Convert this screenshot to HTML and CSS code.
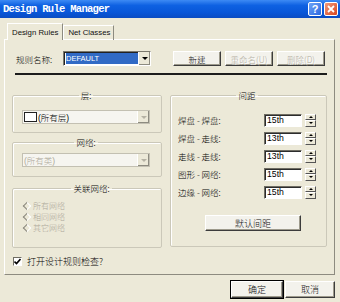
FILE: index.html
```html
<!DOCTYPE html>
<html lang="zh-CN">
<head>
    <meta charset="UTF-8">
    <title>Design Rule Manager</title>
    <link rel="stylesheet" href="styles.css">
</head>
<body>

    <div class="titlebar">
        <span class="title">Design Rule Manager</span>
        <div class="caption-btns">
            <span class="cbtn help">?</span>
            <span class="cbtn close">
                <svg width="8" height="8" viewBox="0 0 8 8"><path d="M1 1L7 7M7 1L1 7" stroke="#fff" stroke-width="1.8"/></svg>
            </span>
        </div>
    </div>

    <div class="tabs">
        <span class="tab active">Design Rules</span>
        <span class="tab">Net Classes</span>
    </div>

    <div class="page">
        <div class="rule-row">
            <span class="lbl">规则名称:</span>
            <div class="combo name-combo">
                <span class="combo-text"><span class="hilite">DEFAULT</span></span>
                <span class="drop"><span class="arrow"></span></span>
            </div>
            <div class="row-btns">
                <button class="btn">新建</button>
                <button class="btn" disabled>重命名(U)</button>
                <button class="btn" disabled>删除(D)</button>
            </div>
        </div>

        <div class="sep"></div>

        <div class="main">
            <div class="left">
                <fieldset class="grp grp-layer">
                    <legend>层:</legend>
                    <div class="combo flat-combo">
                        <span class="combo-text"><span class="swatch"></span>(所有层)</span>
                        <span class="drop"><span class="arrow off"></span></span>
                    </div>
                </fieldset>

                <fieldset class="grp grp-net">
                    <legend>网络:</legend>
                    <div class="combo flat-combo disabled">
                        <span class="combo-text">(所有类)</span>
                        <span class="drop"><span class="arrow off"></span></span>
                    </div>
                </fieldset>

                <fieldset class="grp grp-link">
                    <legend>关联网络:</legend>
                    <div class="radio"><span class="diamond"></span>所有网络</div>
                    <div class="radio"><span class="diamond"></span>相同网络</div>
                    <div class="radio"><span class="diamond"></span>其它网络</div>
                </fieldset>
            </div>

            <fieldset class="grp grp-space">
                <legend>间距</legend>
                <div class="space-row">
                    <span class="space-lbl">焊盘 - 焊盘:</span>
                    <span class="spin-input">15th</span>
                    <span class="spinner"><span class="up"></span><span class="down"></span></span>
                </div>
                <div class="space-row">
                    <span class="space-lbl">焊盘 - 走线:</span>
                    <span class="spin-input">13th</span>
                    <span class="spinner"><span class="up"></span><span class="down"></span></span>
                </div>
                <div class="space-row">
                    <span class="space-lbl">走线 - 走线:</span>
                    <span class="spin-input">13th</span>
                    <span class="spinner"><span class="up"></span><span class="down"></span></span>
                </div>
                <div class="space-row">
                    <span class="space-lbl">图形 - 网络:</span>
                    <span class="spin-input">15th</span>
                    <span class="spinner"><span class="up"></span><span class="down"></span></span>
                </div>
                <div class="space-row">
                    <span class="space-lbl">边缘 - 网络:</span>
                    <span class="spin-input">15th</span>
                    <span class="spinner"><span class="up"></span><span class="down"></span></span>
                </div>
                <button class="btn default-space">默认间距</button>
            </fieldset>
        </div>

        <div class="check-row">
            <span class="checkbox">
                <svg width="7" height="7" viewBox="0 0 7 7"><path d="M0.5 3.5L2.5 5.5L6.5 1" stroke="#000" stroke-width="1.6" fill="none"/></svg>
            </span>
            打开设计规则检查?
        </div>
    </div>

    <div class="footer">
        <button class="btn ok">确定</button>
        <button class="btn cancel">取消</button>
    </div>

</body>
</html>
```

FILE: styles.css
```css
body {
    margin: 0;
    width: 340px;
    height: 302px;
    overflow: hidden;
    background: #ece9d8;
    font-family: "Liberation Sans", "Noto Sans CJK SC", sans-serif;
    font-size: 8.5px;
    color: #000;
}

/* title bar */
.titlebar {
    height: 18px;
    display: flex;
    align-items: center;
    justify-content: space-between;
    padding: 0 2px 0 3px;
    background: linear-gradient(#3d8af4, #0e61e2 30%, #0856d8 70%, #0a4cc2);
}
.title {
    color: #fff;
    font: bold 10.5px "Liberation Mono", monospace;
    letter-spacing: -0.7px;
}
.caption-btns {
    display: flex;
    gap: 2px;
}
.cbtn {
    width: 12px;
    height: 12px;
    border: 1px solid #fff;
    border-radius: 2px;
    display: flex;
    align-items: center;
    justify-content: center;
    color: #fff;
    font: bold 11px "Liberation Sans", sans-serif;
}
.help {
    background: linear-gradient(135deg, #6ea4f7, #2a68e0);
}
.close {
    background: linear-gradient(135deg, #f09a7c, #d9461f);
}

/* tabs */
.tabs {
    display: flex;
    align-items: flex-end;
    height: 17px;
    margin-top: 5px;
    padding-left: 7px;
}
.tab {
    height: 14px;
    line-height: 14px;
    padding: 0 3px 0 4px;
    border: 1px solid;
    border-color: #fff #8d8b80 transparent #fff;
    border-bottom: none;
    font-size: 7.8px;
    color: #111;
}
.tab.active {
    height: 16px;
    line-height: 17px;
    padding: 0 4px;
    position: relative;
    z-index: 1;
    background: #ece9d8;
}

.page {
    width: 329px;
    height: 234px;
    margin: -1px 0 0 4px;
    border: 1px solid;
    border-color: #fff #8d8b80 #8d8b80 #fff;
}

/* rule name row */
.rule-row {
    display: flex;
    align-items: center;
    height: 15px;
    margin-top: 11px;
    padding-left: 11px;
}
.lbl {
    width: 47px;
    font-family: "Noto Sans CJK SC", sans-serif;
    font-weight: 300;
}
.combo {
    display: flex;
    box-sizing: border-box;
    height: 14px;
    border: 1px solid;
    border-color: #7a786d #fff #fff #7a786d;
    background: #fff;
}
.name-combo {
    width: 88px;
    height: 15px;
    box-shadow: inset 1px 1px #222;
}
.combo-text {
    flex: 1;
    display: flex;
    align-items: center;
    padding-left: 1px;
    white-space: nowrap;
    font-weight: 300;
}
.hilite {
    background: #316ac5;
    color: #fff;
    font-size: 7.5px;
    font-weight: 400;
    width: 72px;
    line-height: 11px;
    margin-left: 1px;
}
.drop {
    width: 11px;
    display: flex;
    align-items: center;
    justify-content: center;
    background: #ece9d8;
    border-left: 1px solid #fff;
    box-shadow: inset -1px -1px #8d8b80;
}
.arrow {
    width: 0;
    height: 0;
    border-left: 3px solid transparent;
    border-right: 3px solid transparent;
    border-top: 3px solid #000;
}
.arrow.off {
    border-top-color: #b5b2a4;
}
.row-btns {
    display: flex;
    gap: 4px;
    margin-left: 22px;
}

/* buttons */
.btn {
    box-sizing: border-box;
    width: 48px;
    height: 15px;
    padding: 0;
    border: 1px solid;
    border-color: #fff #3c3c3c #3c3c3c #fff;
    box-shadow: inset -1px -1px #9d9a8c;
    background: #f3f2ec;
    font: 300 8.5px "Noto Sans CJK SC", sans-serif;
    color: #111;
}
.btn:disabled {
    color: #b2ae9f;
    text-shadow: 1px 1px #fff;
}

.sep {
    width: 312px;
    height: 2px;
    margin: 7px 0 0 10px;
    background: #1c1c1c;
}

/* main area */
.main {
    display: flex;
    gap: 8px;
    margin: 15px 0 0 7px;
}
.left {
    display: flex;
    flex-direction: column;
    width: 150px;
}
.grp {
    box-sizing: border-box;
    margin: 0;
    min-width: 0;
    border: 1px solid #cbc8b9;
    border-radius: 2px;
    box-shadow: inset 1px 1px #fff;
}
.grp legend {
    margin: 0 auto;
    padding: 0 2px;
    line-height: 11px;
    font-family: "Noto Sans CJK SC", sans-serif;
    font-weight: 300;
}
.grp-layer {
    height: 43px;
    padding: 9px 11px 0 9px;
}
.grp-net {
    height: 40px;
    margin-top: 4px;
    padding: 5px 11px 0 9px;
}
.grp-link {
    height: 65px;
    margin-top: 6px;
    padding: 6px 0 0 9px;
}
.flat-combo {
    background: #f6f5f0;
    border-color: #c3c0b2;
}
.flat-combo .drop {
    border-left: 1px solid #fff;
}
.swatch {
    box-sizing: border-box;
    width: 13px;
    height: 10px;
    border: 1px solid #222;
    background: #fff;
    margin-right: 1px;
}
.disabled .combo-text {
    color: #aca899;
}

.radio {
    display: flex;
    align-items: center;
    height: 11px;
    color: #aca899;
    font-family: "Noto Sans CJK SC", sans-serif;
    font-weight: 300;
    font-size: 8px;
}
.diamond {
    box-sizing: border-box;
    width: 6px;
    height: 6px;
    margin: 0 3px 0 2px;
    border-top: 1px solid #8a887c;
    border-left: 1px solid #8a887c;
    border-right: 1px solid #fff;
    border-bottom: 1px solid #fff;
    transform: rotate(-45deg);
}

/* spacing group */
.grp-space {
    width: 157px;
    height: 157px;
    padding: 10px 10px 0 7px;
}
.space-row {
    display: flex;
    align-items: center;
    height: 18px;
}
.space-lbl {
    flex: 1;
    font-family: "Noto Sans CJK SC", sans-serif;
    font-weight: 300;
}
.spin-input {
    box-sizing: border-box;
    width: 38px;
    height: 13px;
    line-height: 11px;
    padding-left: 2px;
    border: 1px solid;
    border-color: #6f6d63 #fff #fff #6f6d63;
    box-shadow: inset 1px 1px #2c2c2c;
    background: #fff;
    font-size: 8.7px;
}
.spinner {
    display: flex;
    flex-direction: column;
    width: 11px;
    height: 13px;
    margin-left: 3px;
}
.spinner span {
    flex: 1;
    display: flex;
    align-items: center;
    justify-content: center;
    background: #ece9d8;
    border: 1px solid;
    border-color: #fff #555 #555 #fff;
}
.spinner .up::after,
.spinner .down::after {
    content: "";
    border-left: 2px solid transparent;
    border-right: 2px solid transparent;
}
.spinner .up::after {
    border-bottom: 2px solid #000;
}
.spinner .down::after {
    border-top: 2px solid #000;
}
.default-space {
    width: 96px;
    height: 16px;
    margin: 14px 0 0 27px;
    font-size: 9px;
}

/* checkbox */
.check-row {
    display: flex;
    align-items: center;
    gap: 5px;
    height: 9px;
    margin-top: 9px;
    padding-left: 8px;
    font-family: "Noto Sans CJK SC", sans-serif;
    font-weight: 300;
    font-size: 9px;
}
.checkbox {
    box-sizing: border-box;
    width: 9px;
    height: 9px;
    display: flex;
    align-items: center;
    justify-content: center;
    border: 1px solid;
    border-color: #6f6d63 #fff #fff #6f6d63;
    background: #fff;
}

/* dialog buttons */
.footer {
    display: flex;
    justify-content: flex-end;
    gap: 2px;
    margin-top: 6px;
    padding-right: 5px;
}
.footer .btn {
    width: 50px;
    height: 17px;
    font-size: 9px;
}
.footer .ok {
    width: 52px;
    outline: 1px solid #000;
    outline-offset: 0;
    border-color: #fff #3c3c3c #3c3c3c #fff;
}
```
